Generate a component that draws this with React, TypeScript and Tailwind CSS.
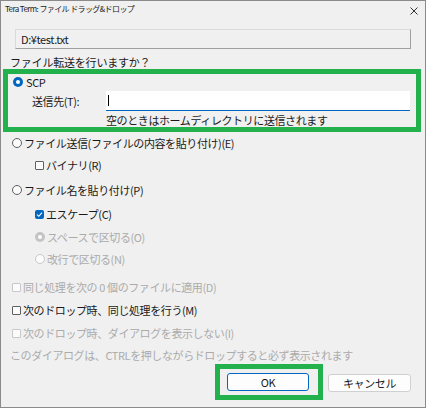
import React from 'react';

const Radio = ({ checked = false, disabled = false }: { checked?: boolean; disabled?: boolean }) => {
  if (checked) {
    return (
      <span
        className={`flex h-[10px] w-[10px] shrink-0 items-center justify-center rounded-full ${
          disabled ? 'bg-[#c4c4c4]' : 'bg-[#0067c0]'
        }`}
      >
        <span className="h-[4px] w-[4px] rounded-full bg-white" />
      </span>
    );
  }
  return (
    <span
      className={`h-[10px] w-[10px] shrink-0 rounded-full border bg-[#fbfbfb] ${
        disabled ? 'border-[#c8c8c8]' : 'border-[#606060]'
      }`}
    />
  );
};

const Check = ({ checked = false, disabled = false }: { checked?: boolean; disabled?: boolean }) => {
  if (checked) {
    return (
      <span className="flex h-[9px] w-[9px] shrink-0 items-center justify-center rounded-[2px] bg-[#0067c0]">
        <svg width="7" height="7" viewBox="0 0 7 7">
          <path d="M1 3.6 L2.8 5.3 L6 1.6" fill="none" stroke="white" strokeWidth="1.1" />
        </svg>
      </span>
    );
  }
  return (
    <span
      className={`h-[9px] w-[9px] shrink-0 rounded-[1px] border bg-[#fbfbfb] ${
        disabled ? 'border-[#c8c8c8]' : 'border-[#606060]'
      }`}
    />
  );
};

const App: React.FC = () => {
  const txt = 'text-[11px] leading-[14px] tracking-[-0.4px]';
  const dim = 'text-[#ababab]';

  return (
    <div
      className={`flex h-[408px] w-[426px] flex-col border border-[#8a8a8a] bg-[#f0f0f0] text-[#1a1a1a] font-['Noto_Sans_CJK_JP','Noto_Sans',sans-serif]`}
    >
      {/* title bar */}
      <div className="flex h-[28px] items-start justify-between pl-[4px] pr-[7px] pt-[2px]">
        <span className="text-[8px] leading-[12px] tracking-[-0.6px] text-[#222]">
          Tera Term: ファイル ドラッグ&amp;ドロップ
        </span>
        <svg width="8" height="8" viewBox="0 0 8 8" className="mt-[4px]">
          <path d="M0.5 0.5 L7.5 7.5 M7.5 0.5 L0.5 7.5" stroke="#333" strokeWidth="1" />
        </svg>
      </div>

      {/* path box */}
      <div className="ml-[14px] flex h-[20px] w-[396px] items-center border border-b-[#a0a0a0] border-l-[#dadada] border-r-[#a0a0a0] border-t-[#dadada] pl-[5px]">
        <span className={txt}>D:¥test.txt</span>
      </div>

      <div className="ml-[9px] mt-[6px] flex h-[14px] items-center text-[11px] leading-[14px] tracking-[-0.2px]">
        ファイル転送を行いますか？
      </div>

      {/* SCP group (highlighted) */}
      <div className="ml-[2px] flex h-[63px] w-[418px] flex-col border-[5px] border-[#22b14c]">
        <div className="mt-[1px] flex h-[14px] items-center gap-[3px] pl-[5px]">
          <Radio checked />
          <span className={txt}>SCP</span>
        </div>
        <div className="mt-[2px] flex h-[20px] items-center">
          <span className={`ml-[24px] w-[74px] ${txt}`}>送信先(T):</span>
          <div className="flex h-[20px] w-[304px] items-center border-b border-b-[#0067c0] bg-white pl-[2px]">
            <span className="h-[11px] w-[1px] bg-black" />
          </div>
        </div>
        <div className={`ml-[98px] mt-[2px] flex h-[14px] items-center ${txt}`}>
          空のときはホームディレクトリに送信されます
        </div>
      </div>

      <div className="ml-[11px] mt-[4px] flex h-[14px] items-center gap-[2px]">
        <Radio />
        <span className={txt}>ファイル送信(ファイルの内容を貼り付け)(E)</span>
      </div>
      <div className="ml-[34px] mt-[8px] flex h-[14px] items-center gap-[2px]">
        <Check />
        <span className={txt}>バイナリ(R)</span>
      </div>
      <div className="ml-[11px] mt-[11px] flex h-[14px] items-center gap-[2px]">
        <Radio />
        <span className={txt}>ファイル名を貼り付け(P)</span>
      </div>
      <div className="ml-[34px] mt-[10px] flex h-[14px] items-center gap-[2px]">
        <Check checked />
        <span className={txt}>エスケープ(C)</span>
      </div>
      <div className="ml-[34px] mt-[9px] flex h-[14px] items-center gap-[2px]">
        <Radio checked disabled />
        <span className={`${txt} ${dim}`}>スペースで区切る(O)</span>
      </div>
      <div className="ml-[34px] mt-[8px] flex h-[14px] items-center gap-[2px]">
        <Radio disabled />
        <span className={`${txt} ${dim}`}>改行で区切る(N)</span>
      </div>

      <div className="ml-[11px] mt-[14px] flex h-[14px] items-center gap-[2px]">
        <Check disabled />
        <span className={`${txt} ${dim}`}>同じ処理を次の 0 個のファイルに適用(D)</span>
      </div>
      <div className="ml-[11px] mt-[9px] flex h-[14px] items-center gap-[2px]">
        <Check />
        <span className={txt}>次のドロップ時、同じ処理を行う(M)</span>
      </div>
      <div className="ml-[11px] mt-[9px] flex h-[14px] items-center gap-[2px]">
        <Check disabled />
        <span className={`${txt} ${dim}`}>次のドロップ時、ダイアログを表示しない(I)</span>
      </div>
      <div className={`ml-[9px] mt-[8px] flex h-[14px] items-center ${txt} ${dim}`}>
        このダイアログは、CTRLを押しながらドロップすると必ず表示されます
      </div>

      {/* buttons */}
      <div className="mt-[2px] flex items-start">
        <div className="ml-[214px] flex h-[36px] w-[108px] items-center border-[5px] border-[#22b14c] pl-[7px]">
          <button className={`flex h-[18px] w-[82px] items-center justify-center rounded-[3px] border border-[#0067c0] bg-[#fdfdfd] ${txt}`}>
            OK
          </button>
        </div>
        <button
          className={`ml-[5px] mt-[10px] flex h-[18px] w-[83px] items-center justify-center rounded-[3px] border border-[#d0d0d0] bg-[#fdfdfd] ${txt}`}
        >
          キャンセル
        </button>
      </div>
    </div>
  );
};

export default App;
